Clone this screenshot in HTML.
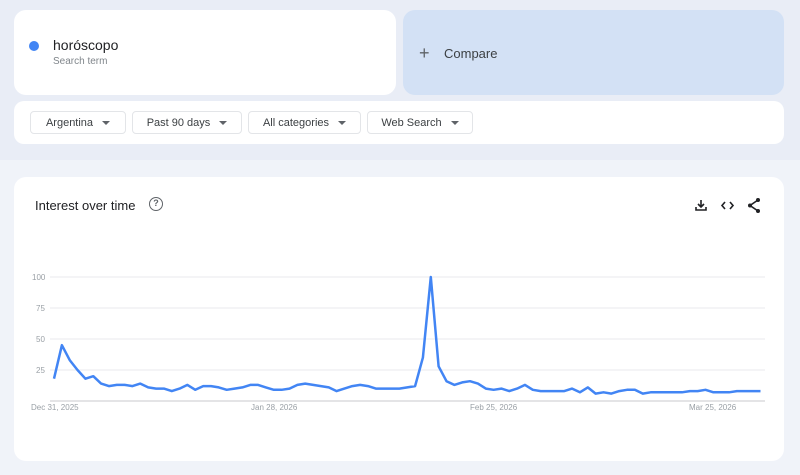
<!DOCTYPE html>
<html><head><meta charset="utf-8"><style>
*{margin:0;padding:0;box-sizing:border-box}
body{width:800px;height:475px;background:#f0f3f9;font-family:"Liberation Sans",sans-serif;position:relative;overflow:hidden}
.top{position:absolute;left:0;top:0;width:800px;height:160px;background:#e9edf6}
.card{position:absolute;background:#fff;border-radius:12px}
.dd{position:absolute;top:111px;height:23px;border:1px solid #e3e5e8;border-radius:4px;font-size:11px;color:#3c4043;display:flex;align-items:center;justify-content:center;gap:9px}
.dd i{width:0;height:0;border-left:4px solid transparent;border-right:4px solid transparent;border-top:4px solid #5f6368}
.lbl{position:absolute;font-size:8px;color:#9aa0a6}
</style></head><body>
<div class="top"></div>
<div class="card" style="left:14px;top:10px;width:382px;height:85px"></div>
<div style="position:absolute;left:29px;top:41px;width:10px;height:10px;border-radius:50%;background:#4285f4"></div>
<div style="position:absolute;left:53px;top:37px;font-size:14px;color:#202124">horóscopo</div>
<div style="position:absolute;left:53px;top:56px;font-size:10px;color:#80868b">Search term</div>
<div style="position:absolute;left:403px;top:10px;width:381px;height:85px;background:#d3e1f5;border-radius:12px"></div>
<div style="position:absolute;left:419px;top:43px;font-size:18px;color:#5f6368;line-height:20px">+</div>
<div style="position:absolute;left:444px;top:46px;font-size:13px;color:#3c4043">Compare</div>
<div class="card" style="left:14px;top:101px;width:770px;height:43px;border-radius:10px"></div>
<div class="dd" style="left:30px;width:96px">Argentina<i></i></div>
<div class="dd" style="left:132px;width:110px">Past 90 days<i></i></div>
<div class="dd" style="left:248px;width:113px">All categories<i></i></div>
<div class="dd" style="left:367px;width:106px">Web Search<i></i></div>
<div class="card" style="left:14px;top:177px;width:770px;height:284px"></div>
<div style="position:absolute;left:35px;top:198px;font-size:13px;color:#202124">Interest over time</div>
<div style="position:absolute;left:149px;top:197px;width:14px;height:14px;border:1.5px solid #5f6368;border-radius:50%;font-size:9px;font-weight:bold;color:#5f6368;text-align:center;line-height:11px">?</div>
<svg style="position:absolute;left:0;top:0" width="800" height="475">
<g stroke="#202124" stroke-width="1.6" fill="none">
<path d="M701 200v7M698 204l3 3 3-3M696 207v3h10v-3"/>
<path d="M725 202l-3 3.5 3 3.5M730 202l3 3.5-3 3.5"/>
<path d="M758 200l-8 5.5 8 5.5"/>
</g>
<g fill="#202124"><circle cx="758" cy="200" r="2"/><circle cx="750" cy="205.5" r="2"/><circle cx="758" cy="211" r="2"/></g>
<g stroke="#e8eaed" stroke-width="1"><line x1="50" y1="277" x2="765" y2="277"/><line x1="50" y1="308" x2="765" y2="308"/><line x1="50" y1="339" x2="765" y2="339"/><line x1="50" y1="370" x2="765" y2="370"/></g>
<line x1="50" y1="401" x2="765" y2="401" stroke="#c8cacd" stroke-width="1"/>
<path id="ln" fill="none" stroke="#4285f4" stroke-width="2.5" stroke-linejoin="round"/>
</svg>
<div class="lbl" style="left:32px;top:273px">100</div>
<div class="lbl" style="left:36px;top:304px">75</div>
<div class="lbl" style="left:36px;top:335px">50</div>
<div class="lbl" style="left:36px;top:366px">25</div>
<div class="lbl" style="left:31px;top:403px">Dec 31, 2025</div>
<div class="lbl" style="left:251px;top:403px">Jan 28, 2026</div>
<div class="lbl" style="left:470px;top:403px">Feb 25, 2026</div>
<div class="lbl" style="left:689px;top:403px">Mar 25, 2026</div>
<script>
var v=[18,45,33,25,18,20,14,12,13,13,12,14,11,10,10,8,10,13,9,12,12,11,9,10,11,13,13,11,9,9,10,13,14,13,12,11,8,10,12,13,12,10,10,10,10,11,12,35,100,28,16,13,15,16,14,10,9,10,8,10,13,9,8,8,8,8,10,7,11,6,7,6,8,9,9,6,7,7,7,7,7,8,8,9,7,7,7,8,8,8,8];
var d="";for(var i=0;i<v.length;i++){d+=(i?"L":"M")+(54+i*7.85).toFixed(1)+" "+(401-v[i]*1.24).toFixed(1);}
document.getElementById("ln").setAttribute("d",d);
</script>
</body></html>
